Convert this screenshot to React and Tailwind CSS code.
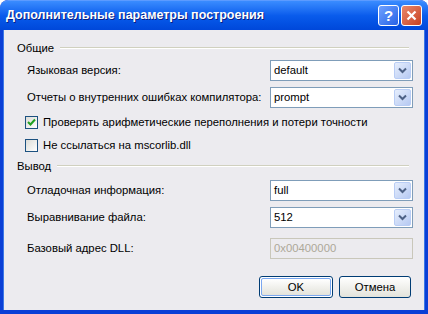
import React from "react";

const font = { fontFamily: '"Liberation Sans", "DejaVu Sans", sans-serif' };

function Chevron() {
  return (
    <svg width="9" height="7" viewBox="0 0 9 7">
      <path d="M1 1.5 L4.5 5 L8 1.5" fill="none" stroke="#4D6185" strokeWidth="2" />
    </svg>
  );
}

function Combo({ value }) {
  return (
    <div className="w-[143px] h-[21px] shrink-0 border border-[#7F9DB9] bg-white flex items-stretch">
      <div className="flex-1 flex items-center pl-[3px] text-[11.3px] text-black">{value}</div>
      <div className="w-[17px] m-[1px] rounded-[2px] border border-[#B9CDF5] bg-gradient-to-br from-[#E6EEFC] to-[#B6C9F2] flex items-center justify-center">
        <Chevron />
      </div>
    </div>
  );
}

function Checkbox({ checked, label }) {
  return (
    <div className="flex items-center h-[13px] pl-[21px]">
      <div className="w-[13px] h-[13px] shrink-0 border border-[#1C5180] bg-gradient-to-br from-[#DCDCD7] to-white flex items-center justify-center">
        {checked && (
          <svg width="9" height="9" viewBox="0 0 9 9">
            <path d="M1 4 L3.5 6.5 L8 1.5" fill="none" stroke="#21A121" strokeWidth="2" />
          </svg>
        )}
      </div>
      <span className="ml-[5px] text-[11.3px] text-black whitespace-nowrap">{label}</span>
    </div>
  );
}

function Row({ label, children }) {
  return (
    <div className="flex items-center justify-between pl-[23px] pr-[11px]">
      <span className="text-[11.3px] text-black whitespace-nowrap">{label}</span>
      {children}
    </div>
  );
}

function Header({ label }) {
  return (
    <div className="flex items-center h-[14px] pl-[13px] pr-[15px]">
      <span className="text-[11.3px] text-black">{label}</span>
      <div className="flex-1 ml-[6px] border-t border-[#D0D0BF] border-b border-b-white h-0" />
    </div>
  );
}

export default function App() {
  return (
    <div style={font} className="w-[428px] h-[314px] bg-[#0A3FD6] rounded-t-[8px] flex flex-col overflow-hidden">
      <div className="h-[30px] shrink-0 flex items-center pl-[6px] pr-[6px] rounded-t-[8px] bg-gradient-to-b from-[#3A8CFF] via-[#0A5CEC] to-[#0047DA] border-t border-[#5C9BFF]">
        <span className="flex-1 text-white font-bold text-[12.5px] [text-shadow:1px_1px_0_#0A1E80]">
          Дополнительные параметры построения
        </span>
        <div className="w-[21px] h-[21px] rounded-[3px] border border-white bg-gradient-to-br from-[#6FA1FF] to-[#2661E6] flex items-center justify-center text-white font-bold text-[15px] leading-none">
          ?
        </div>
        <div className="ml-[2px] w-[21px] h-[21px] rounded-[3px] border border-white bg-gradient-to-br from-[#E9876B] to-[#C8401E] flex items-center justify-center">
          <svg width="11" height="11" viewBox="0 0 11 11">
            <path d="M1.5 1.5 L9.5 9.5 M9.5 1.5 L1.5 9.5" stroke="white" strokeWidth="2.2" />
          </svg>
        </div>
      </div>
      <div className="flex-1 mx-[3px] mb-[4px] bg-[#ECEBEF] border-x border-[#3C78E6] flex flex-col">
        <div className="mt-[11px]">
          <Header label="Общие" />
        </div>
        <div className="mt-[5px]">
          <Row label="Языковая версия:">
            <Combo value="default" />
          </Row>
        </div>
        <div className="mt-[6px]">
          <Row label="Отчеты о внутренних ошибках компилятора:">
            <Combo value="prompt" />
          </Row>
        </div>
        <div className="mt-[8px]">
          <Checkbox checked label="Проверять арифметические переполнения и потери точности" />
        </div>
        <div className="mt-[10px]">
          <Checkbox label="Не ссылаться на mscorlib.dll" />
        </div>
        <div className="mt-[7px]">
          <Header label="Вывод" />
        </div>
        <div className="mt-[7px]">
          <Row label="Отладочная информация:">
            <Combo value="full" />
          </Row>
        </div>
        <div className="mt-[6px]">
          <Row label="Выравнивание файла:">
            <Combo value="512" />
          </Row>
        </div>
        <div className="mt-[10px]">
          <Row label="Базовый адрес DLL:">
            <div className="w-[143px] h-[21px] shrink-0 border border-[#C9C7BA] bg-[#ECEBEF] flex items-center pl-[3px] text-[11.3px] text-[#ACA899]">
              0x00400000
            </div>
          </Row>
        </div>
        <div className="mt-[17px] flex justify-end gap-[6px] pr-[13px]">
          <div className="w-[74px] h-[22px] rounded-[3px] border border-[#003C74] p-[1px] bg-white">
            <div className="w-full h-full rounded-[2px] border border-[#7BA7F0] bg-gradient-to-b from-white to-[#E3E3DB] flex items-center justify-center text-[11.3px] text-black">
              OK
            </div>
          </div>
          <div className="w-[72px] h-[22px] rounded-[3px] border border-[#003C74] bg-gradient-to-b from-white to-[#E3E3DB] flex items-center justify-center text-[11.3px] text-black">
            Отмена
          </div>
        </div>
      </div>
    </div>
  );
}
